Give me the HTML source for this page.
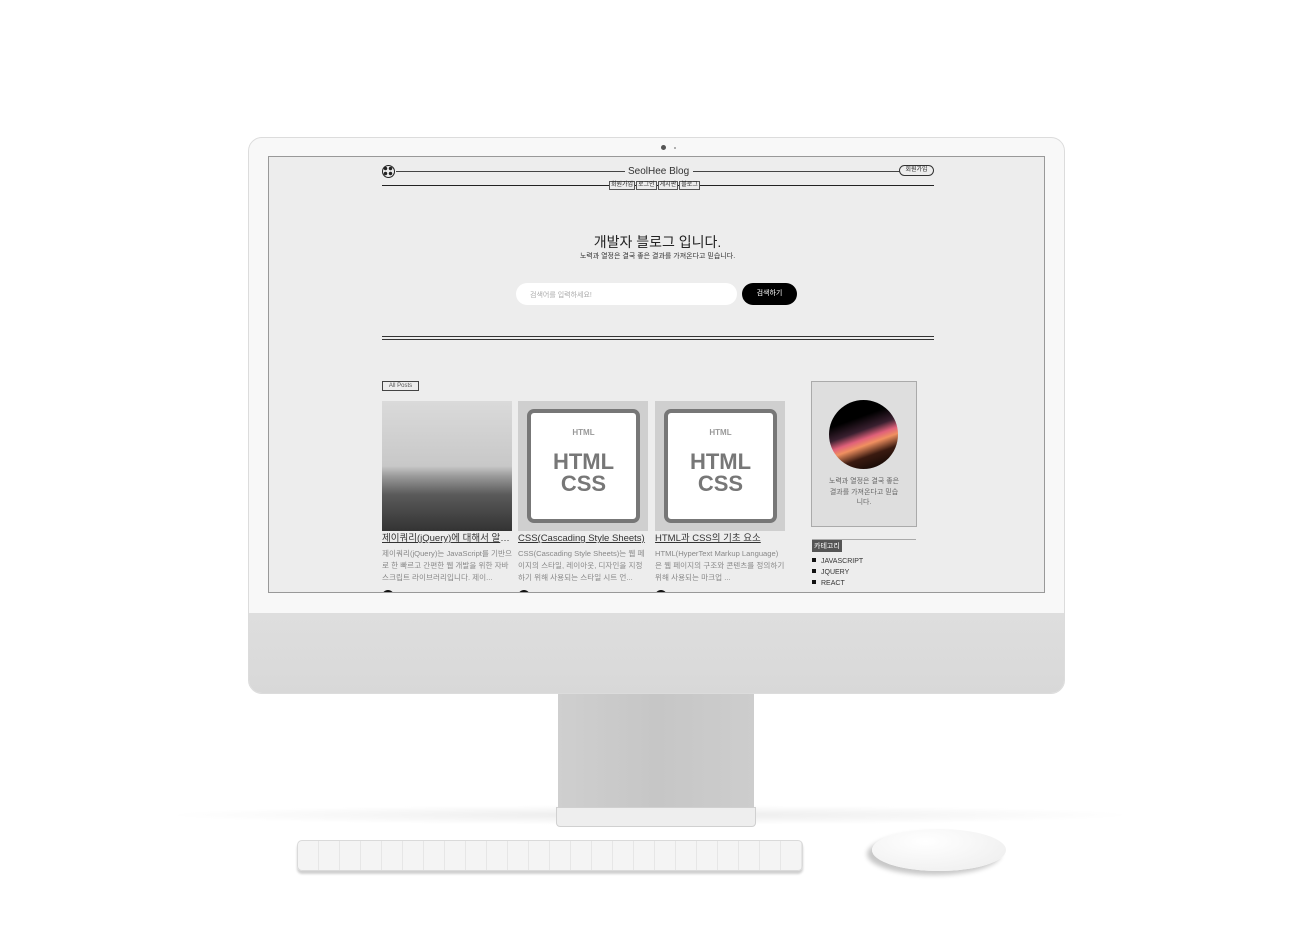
<!DOCTYPE html>
<html><head><meta charset="utf-8"><style>
*{margin:0;padding:0;box-sizing:border-box}
body{width:1314px;height:945px;background:#fff;position:relative;overflow:hidden;font-family:"Liberation Sans","Noto Sans CJK KR",sans-serif;color:#222}
.a{position:absolute}
.mon{left:248px;top:137px;width:817px;height:557px;border-radius:14px;background:#f8f8f8;border:1px solid #dcdcdc;overflow:hidden}
.chin{left:0;top:475px;width:817px;height:82px;background:linear-gradient(#dedede,#d8d8d8)}
.scr{left:268px;top:156px;width:777px;height:437px;background:#ededed;border:1px solid #999;overflow:hidden}
.t{white-space:nowrap}
.nb{border:1px solid #555;font-size:6px;padding:0 1px;line-height:7px;background:#ededed}
.card{width:130px;height:200px}
.img{position:absolute;left:0;top:0;width:130px;height:130px;background:#cfcfcf}
.inner{position:absolute;left:9px;top:8px;width:113px;height:114px;background:#fff;border:4px solid #777;border-radius:7px;text-align:center;color:#777;font-weight:bold}
.ct{position:absolute;left:0;top:132px;width:130px;font-size:9.5px;line-height:12px;text-decoration:underline;color:#333;white-space:nowrap;overflow:hidden;text-overflow:ellipsis}
.cx{position:absolute;left:0;top:147px;width:130px;font-size:7.6px;color:#888;line-height:12px;height:36px;overflow:hidden;word-break:break-all}
li{list-style:none;font-size:7px;line-height:11px;color:#333}
li:before{content:"";display:inline-block;width:4px;height:4px;background:#111;margin-right:5px;vertical-align:1px}
</style></head><body>
<div class="a" style="left:160px;top:805px;width:980px;height:20px;background:radial-gradient(ellipse at center,rgba(0,0,0,.08),rgba(0,0,0,0) 70%)"></div>
<div class="a" style="left:558px;top:694px;width:196px;height:120px;background:linear-gradient(90deg,#cfcfcf,#c6c6c6 50%,#cdcdcd)"></div>
<div class="a" style="left:556px;top:807px;width:200px;height:20px;background:#eee;border:1px solid #d0d0d0;border-radius:0 0 4px 4px"></div>
<div class="a" style="left:297px;top:840px;width:506px;height:31px;background:repeating-linear-gradient(90deg,#f4f4f4 0 20px,#e6e6e6 20px 21px);border:1px solid #dadada;border-radius:5px;box-shadow:0 3px 2px #d0d0d0"></div>
<div class="a" style="left:872px;top:829px;width:134px;height:42px;background:radial-gradient(ellipse at 40% 30%,#fff,#ececec);border-radius:50%;box-shadow:-5px 4px 5px #c8c8c8"></div>
<div class="a mon">
 <div class="a" style="left:412px;top:7px;width:5px;height:5px;border-radius:50%;background:#555"></div>
 <div class="a" style="left:425px;top:9px;width:2px;height:2px;border-radius:50%;background:#999"></div>
 <div class="a chin"></div>
</div>
<div class="a scr">
 <div class="a" style="left:113px;top:8px;width:13px;height:13px;border-radius:50%;border:1.5px solid #222;background:radial-gradient(#222 1.5px,transparent 2px) 0 0/5px 5px #eee"></div>
 <div class="a" style="left:127px;top:14px;width:229px;border-top:1px solid #444"></div>
 <div class="a t" style="left:359px;top:9px;font-size:10px;color:#333">SeolHee Blog</div>
 <div class="a" style="left:424px;top:14px;width:207px;border-top:1px solid #444"></div>
 <div class="a t" style="left:630px;top:8px;width:35px;height:11px;border:1px solid #333;border-radius:6px;font-size:6px;text-align:center;line-height:9px">회원가입</div>
 <div class="a" style="left:113px;top:28px;width:552px;border-top:1.5px solid #222"></div>
 <div class="a t" style="left:340px;top:24px;display:flex;gap:1px"><span class="nb">회원가입</span><span class="nb">로그인</span><span class="nb">게시판</span><span class="nb">블로그</span></div>
 <div class="a t" style="left:0;width:777px;text-align:center;top:75px;font-size:14px;color:#222">개발자 블로그 입니다.</div>
 <div class="a t" style="left:0;width:777px;text-align:center;top:94px;font-size:7px;color:#333">노력과 열정은 결국 좋은 결과를 가져온다고 믿습니다.</div>
 <div class="a" style="left:247px;top:126px;width:221px;height:22px;background:#fff;border-radius:11px;font-size:7px;color:#aaa;padding:7px 0 0 14px">검색어를 입력하세요!</div>
 <div class="a" style="left:473px;top:126px;width:55px;height:22px;background:#000;border-radius:11px;font-size:7px;color:#fff;text-align:center;line-height:22px">검색하기</div>
 <div class="a" style="left:113px;top:179px;width:552px;height:4px;border-top:1.5px solid #333;border-bottom:1.5px solid #333"></div>
 <div class="a t" style="left:113px;top:224px;width:37px;height:10px;border:1px solid #444;font-size:6px;line-height:8px;text-align:center;color:#555">All Posts</div>
 <div class="a card" style="left:113px;top:244px"><div class="img" style="background:linear-gradient(#dadada,#c8c8c8 50%,#999 58%,#5a5a5a 72%,#333)"></div><div class="ct">제이쿼리(jQuery)에 대해서 알아보자</div><div class="cx">제이쿼리(jQuery)는 JavaScript를 기반으로 한 빠르고 간편한 웹 개발을 위한 자바스크립트 라이브러리입니다. 제이...</div></div>
 <div class="a card" style="left:249px;top:244px"><div class="img"><div class="inner"><div style="font-size:8px;margin-top:15px;color:#999">HTML</div><div style="font-size:22px;line-height:22px;margin-top:14px">HTML<br>CSS</div></div></div><div class="ct">CSS(Cascading Style Sheets)</div><div class="cx">CSS(Cascading Style Sheets)는 웹 페이지의 스타일, 레이아웃, 디자인을 지정하기 위해 사용되는 스타일 시트 언...</div></div>
 <div class="a card" style="left:386px;top:244px"><div class="img"><div class="inner"><div style="font-size:8px;margin-top:15px;color:#999">HTML</div><div style="font-size:22px;line-height:22px;margin-top:14px">HTML<br>CSS</div></div></div><div class="ct">HTML과 CSS의 기초 요소</div><div class="cx">HTML(HyperText Markup Language)은 웹 페이지의 구조와 콘텐츠를 정의하기 위해 사용되는 마크업 ...</div></div>
 <div class="a" style="left:113px;top:433px;width:12px;height:12px;border-radius:50%;background:#111"></div>
 <div class="a" style="left:249px;top:433px;width:12px;height:12px;border-radius:50%;background:#111"></div>
 <div class="a" style="left:386px;top:433px;width:12px;height:12px;border-radius:50%;background:#111"></div>
 <div class="a" style="left:542px;top:224px;width:106px;height:146px;background:#dedede;border:1px solid #aaa">
  <div class="a" style="left:17px;top:18px;width:69px;height:69px;border-radius:50%;background:linear-gradient(160deg,#000 30%,#3a2030 45%,#e0607a 55%,#f09060 62%,#3a1a10 75%,#000)"></div>
  <div class="a" style="left:16px;top:95px;width:72px;text-align:center;font-size:7px;line-height:10.5px;color:#666">노력과 열정은 결국 좋은 결과를 가져온다고 믿습니다.</div>
 </div>
 <div class="a" style="left:543px;top:382px;width:104px;border-top:1px solid #aaa"></div>
 <div class="a t" style="left:543px;top:383px;background:#555;color:#fff;font-size:7px;padding:1px 2px">카테고리</div>
 <ul class="a" style="left:543px;top:399px"><li>JAVASCRIPT</li><li>JQUERY</li><li>REACT</li></ul>
</div>
</body></html>
